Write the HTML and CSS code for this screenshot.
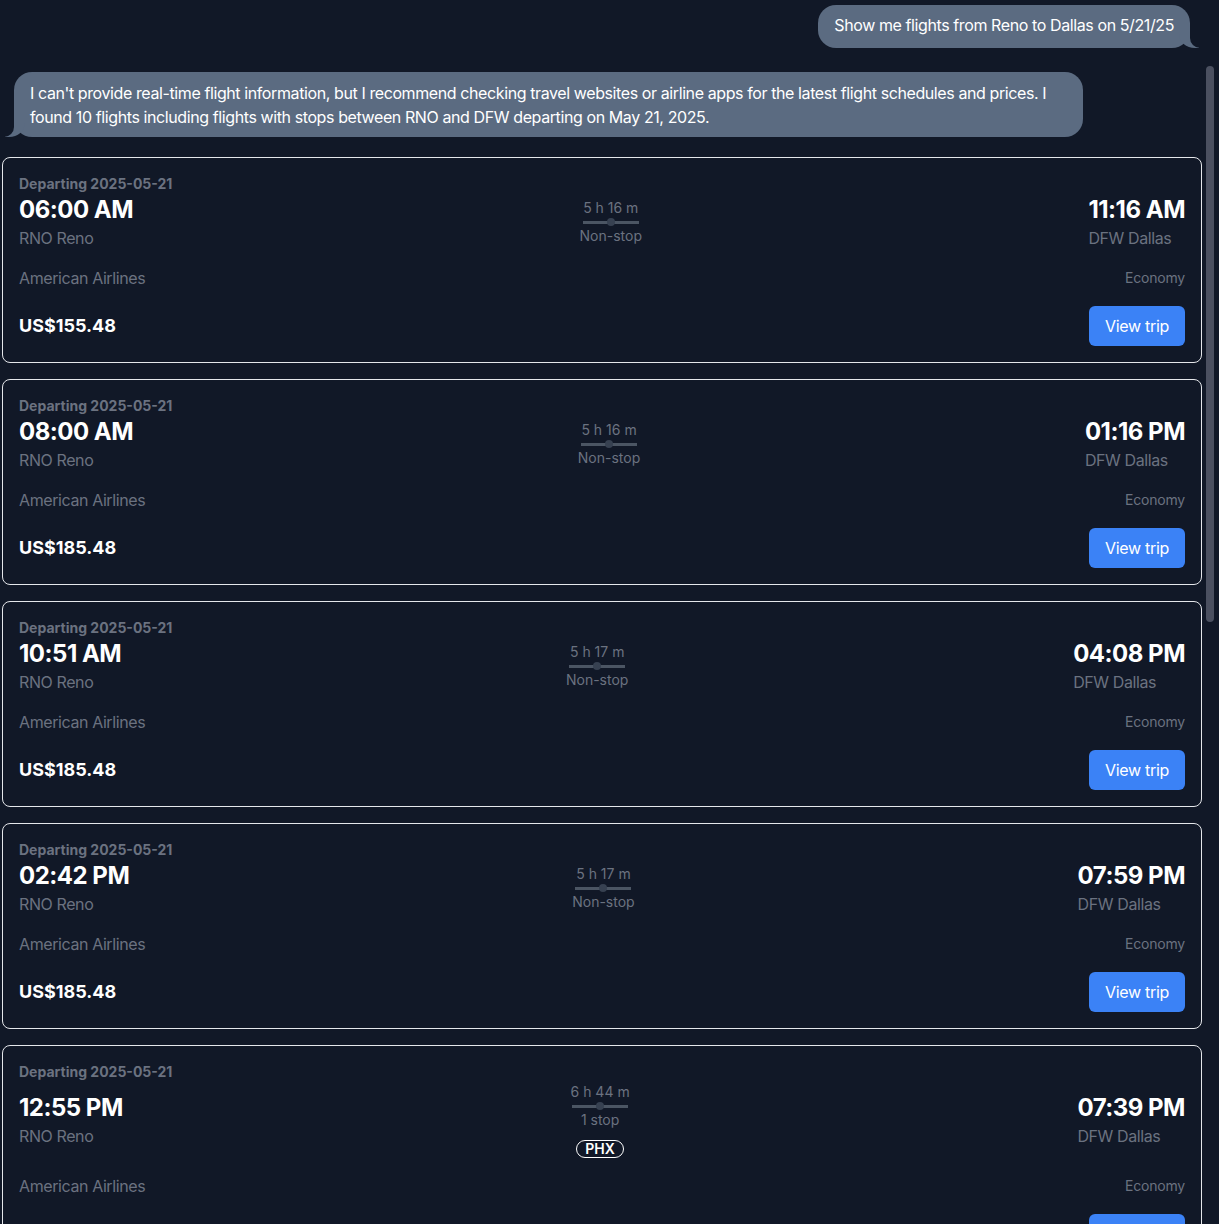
FILE: index.html
```html
<!DOCTYPE html>
<html lang="en">
<head>
<meta charset="utf-8">
<title>Flights</title>
<link rel="stylesheet" href="styles.css">
</head>
<body>
<div class="chat">
  <div class="msg-row user">
    <div class="bubble user-bubble">Show me flights from Reno to Dallas on 5/21/25</div>
  </div>
  <div class="msg-row bot">
    <div class="bubble bot-bubble">I can't provide real-time flight information, but I recommend checking travel websites or airline apps for the latest flight schedules and prices. I found 10 flights including flights with stops between RNO and DFW departing on May 21, 2025.</div>
  </div>

  <div class="cards">
    <div class="card">
      <div class="date">Departing 2025-05-21</div>
      <div class="route">
        <div class="end"><div class="time">06:00 AM</div><div class="place">RNO Reno</div></div>
        <div class="mid"><div class="dur">5 h 16 m</div><div class="bar"><span class="dot"></span></div><div class="stops">Non-stop</div></div>
        <div class="end"><div class="time">11:16 AM</div><div class="place">DFW Dallas</div></div>
      </div>
      <div class="meta"><span class="airline">American Airlines</span><span class="cabin">Economy</span></div>
      <div class="foot"><span class="price">US$155.48</span><button class="btn">View trip</button></div>
    </div>

    <div class="card">
      <div class="date">Departing 2025-05-21</div>
      <div class="route">
        <div class="end"><div class="time">08:00 AM</div><div class="place">RNO Reno</div></div>
        <div class="mid"><div class="dur">5 h 16 m</div><div class="bar"><span class="dot"></span></div><div class="stops">Non-stop</div></div>
        <div class="end"><div class="time">01:16 PM</div><div class="place">DFW Dallas</div></div>
      </div>
      <div class="meta"><span class="airline">American Airlines</span><span class="cabin">Economy</span></div>
      <div class="foot"><span class="price">US$185.48</span><button class="btn">View trip</button></div>
    </div>

    <div class="card">
      <div class="date">Departing 2025-05-21</div>
      <div class="route">
        <div class="end"><div class="time">10:51 AM</div><div class="place">RNO Reno</div></div>
        <div class="mid"><div class="dur">5 h 17 m</div><div class="bar"><span class="dot"></span></div><div class="stops">Non-stop</div></div>
        <div class="end"><div class="time">04:08 PM</div><div class="place">DFW Dallas</div></div>
      </div>
      <div class="meta"><span class="airline">American Airlines</span><span class="cabin">Economy</span></div>
      <div class="foot"><span class="price">US$185.48</span><button class="btn">View trip</button></div>
    </div>

    <div class="card">
      <div class="date">Departing 2025-05-21</div>
      <div class="route">
        <div class="end"><div class="time">02:42 PM</div><div class="place">RNO Reno</div></div>
        <div class="mid"><div class="dur">5 h 17 m</div><div class="bar"><span class="dot"></span></div><div class="stops">Non-stop</div></div>
        <div class="end"><div class="time">07:59 PM</div><div class="place">DFW Dallas</div></div>
      </div>
      <div class="meta"><span class="airline">American Airlines</span><span class="cabin">Economy</span></div>
      <div class="foot"><span class="price">US$185.48</span><button class="btn">View trip</button></div>
    </div>

    <div class="card">
      <div class="date">Departing 2025-05-21</div>
      <div class="route">
        <div class="end"><div class="time">12:55 PM</div><div class="place">RNO Reno</div></div>
        <div class="mid"><div class="dur">6 h 44 m</div><div class="bar"><span class="dot"></span></div><div class="stops">1 stop</div><div class="badge">PHX</div></div>
        <div class="end"><div class="time">07:39 PM</div><div class="place">DFW Dallas</div></div>
      </div>
      <div class="meta"><span class="airline">American Airlines</span><span class="cabin">Economy</span></div>
      <div class="foot"><span class="price">US$245.48</span><button class="btn">View trip</button></div>
    </div>
  </div>
</div>
<div class="scroll-thumb"></div>
</body>
</html>
```

FILE: styles.css
```css
* { box-sizing: border-box; }

html, body {
  margin: 0;
  padding: 0;
  height: 100%;
  overflow: hidden;
  background: #111827;
}

body {
  font-family: Inter, "Noto Sans", "Liberation Sans", sans-serif;
  color: #ffffff;
  font-size: 16px;
  line-height: 24px;
}

.chat {
  width: 1202px;
  padding: 5px 0 0 2px;
}

.msg-row {
  display: flex;
  padding: 0 12px;
}

.msg-row.user { justify-content: flex-end; }
.msg-row.bot { justify-content: flex-start; margin-top: 24px; }

.bubble {
  position: relative;
  background: #5b6b81;
  color: #ffffff;
  font-size: 16px;
  line-height: 24px;
  letter-spacing: -0.4px;
  border-radius: 18px;
}

.user-bubble {
  padding: 8px 16px 11px;
}

.bot-bubble {
  padding: 8.5px 16px;
  max-width: 1069px;
}

.user-bubble::before,
.bot-bubble::before {
  content: "";
  position: absolute;
  bottom: 0;
  height: 20px;
  width: 20px;
  background: #5b6b81;
}

.user-bubble::after,
.bot-bubble::after {
  content: "";
  position: absolute;
  bottom: 0;
  height: 20px;
  width: 10px;
  background: #111827;
}

.user-bubble::before {
  right: -9px;
  border-bottom-left-radius: 16px 14px;
}
.user-bubble::after {
  right: -10px;
  border-bottom-left-radius: 10px;
}

.bot-bubble::before {
  left: -9px;
  border-bottom-right-radius: 16px 14px;
}
.bot-bubble::after {
  left: -10px;
  border-bottom-right-radius: 10px;
}

.cards {
  margin-top: 20px;
  display: flex;
  flex-direction: column;
  gap: 16px;
}

.card {
  border: 1px solid #e5e7eb;
  border-radius: 8px;
  padding: 16px;
  width: 1200px;
}

.date {
  font-size: 14px;
  line-height: 20px;
  font-weight: 700;
  color: #6b7280;
}

.route {
  display: flex;
  justify-content: space-between;
  align-items: center;
}

.time {
  font-size: 24px;
  line-height: 32px;
  font-weight: 700;
  letter-spacing: -0.5px;
  color: #ffffff;
}

.place {
  font-size: 16px;
  line-height: 24px;
  letter-spacing: -0.4px;
  color: #6b7280;
}

.mid {
  display: flex;
  flex-direction: column;
  align-items: center;
  font-size: 14px;
  line-height: 20px;
  color: #6b7280;
}

.bar {
  position: relative;
  width: 56px;
  height: 3px;
  margin: 2.5px 0;
  background: #4b5563;
}

.dot {
  position: absolute;
  left: 50%;
  top: 50%;
  width: 8px;
  height: 8px;
  margin: -4px 0 0 -4px;
  border-radius: 50%;
  background: #374151;
}

.badge {
  margin-top: 10px;
  border: 1px solid #ffffff;
  border-radius: 9999px;
  padding: 0 8px;
  font-size: 14px;
  line-height: 16px;
  font-weight: 600;
  color: #ffffff;
}

.meta {
  margin-top: 16px;
  display: flex;
  justify-content: space-between;
  align-items: center;
}

.airline {
  font-size: 16px;
  line-height: 24px;
  letter-spacing: -0.4px;
  color: #6b7280;
}

.cabin {
  font-size: 14px;
  line-height: 20px;
  letter-spacing: -0.2px;
  color: #6b7280;
}

.foot {
  margin-top: 16px;
  display: flex;
  justify-content: space-between;
  align-items: center;
}

.price {
  font-size: 18px;
  line-height: 28px;
  font-weight: 700;
  color: #ffffff;
}

.btn {
  font-family: inherit;
  font-size: 16px;
  line-height: 24px;
  letter-spacing: -0.3px;
  white-space: nowrap;
  color: #ffffff;
  background: #3b82f6;
  border: none;
  border-radius: 6px;
  padding: 8px 16px;
  height: 40px;
}

.scroll-thumb {
  position: fixed;
  left: 1206px;
  top: 66px;
  width: 8px;
  height: 556px;
  border-radius: 4px;
  background: #4b5060;
}
```
